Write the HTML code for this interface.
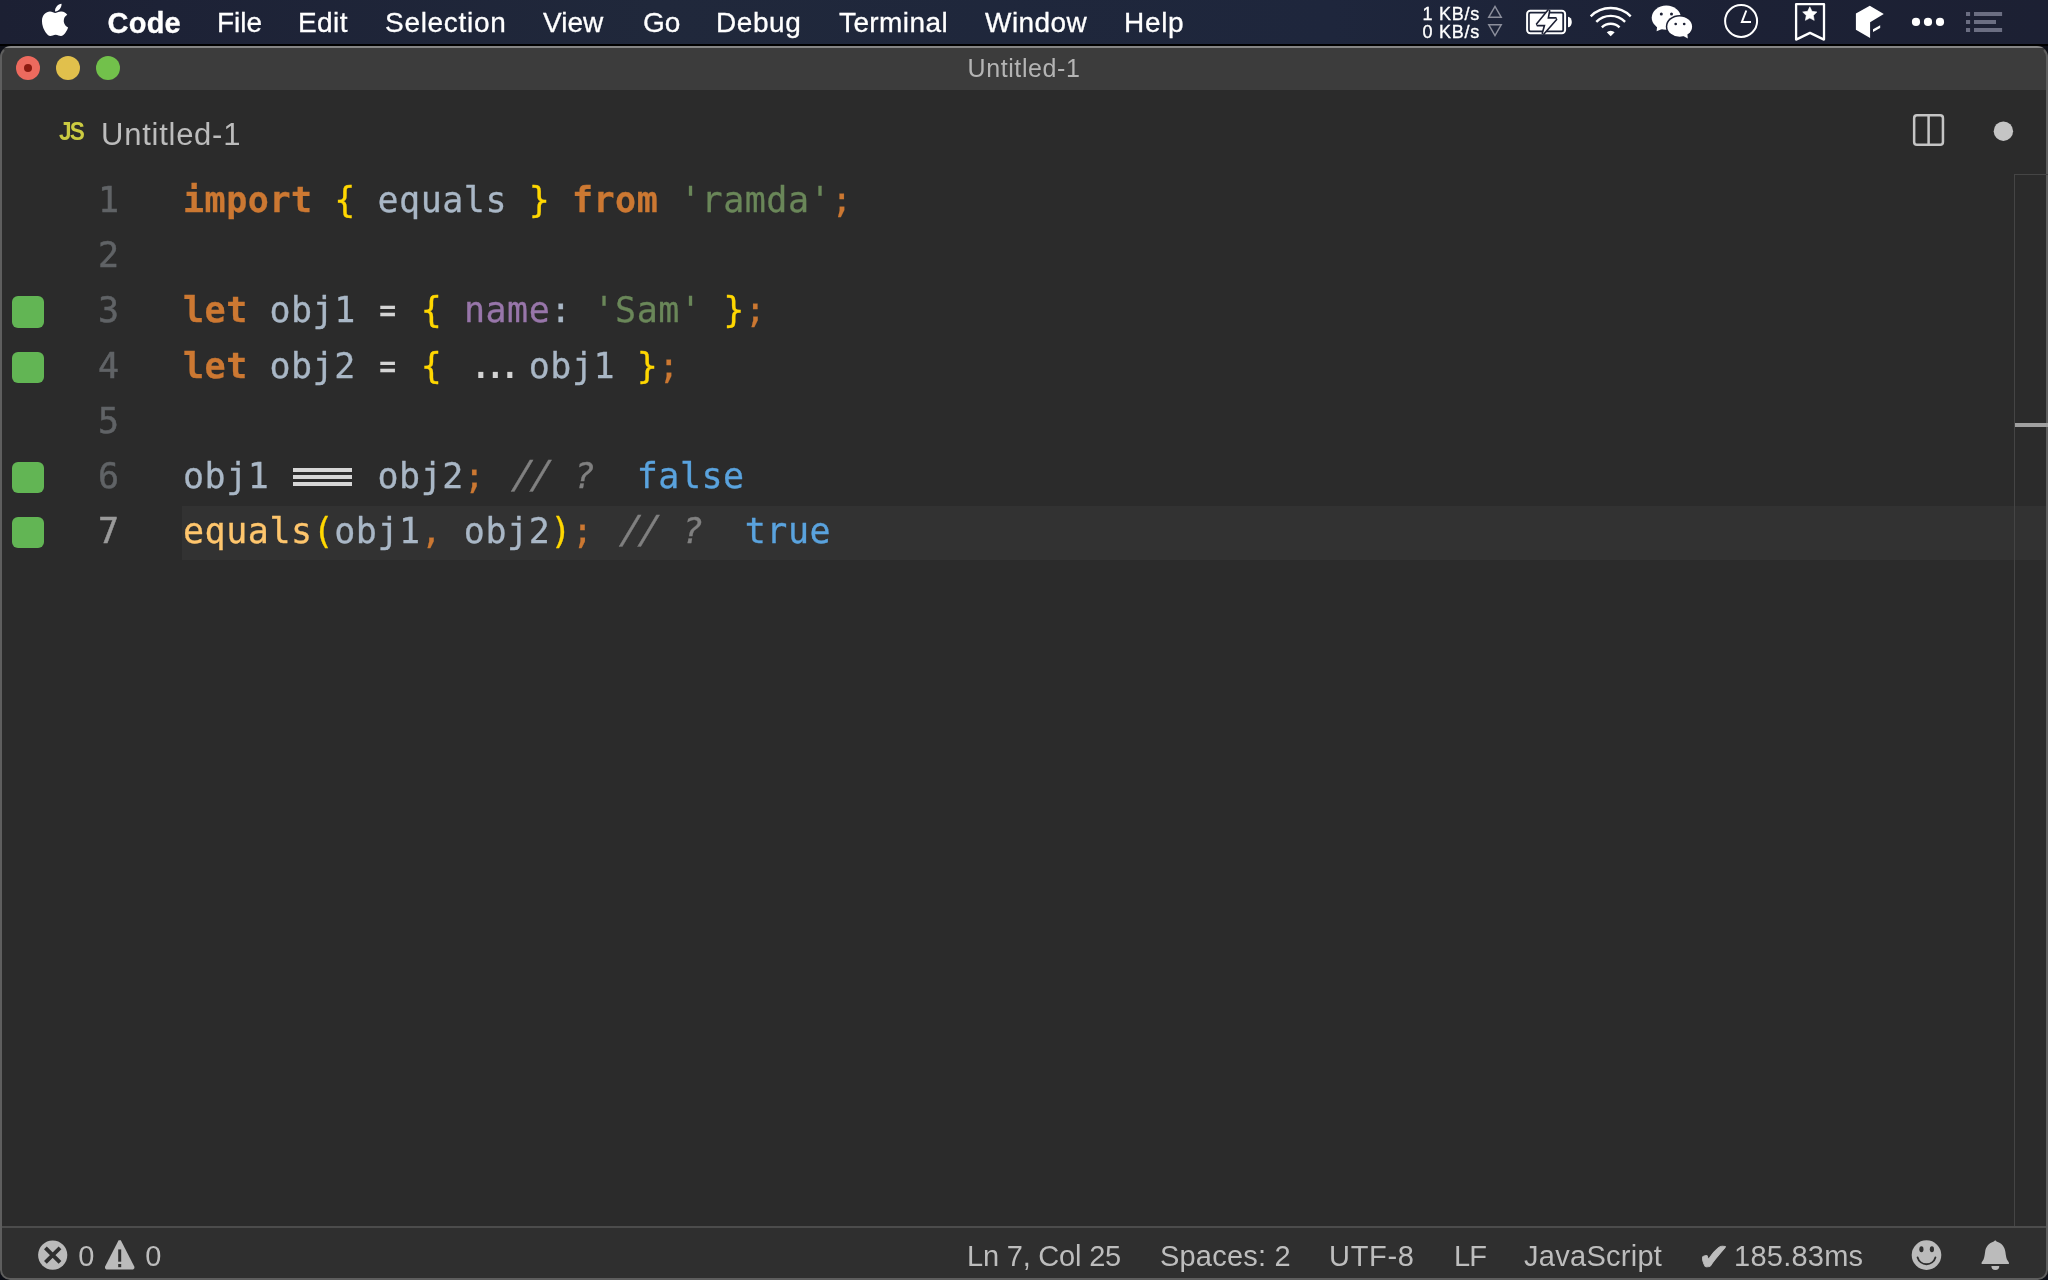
<!DOCTYPE html>
<html lang="en">
<head>
<meta charset="utf-8">
<title>Untitled-1</title>
<style>
*{margin:0;padding:0;box-sizing:border-box}
html,body{width:2048px;height:1280px;overflow:hidden;background:#0d0f17}
body{position:relative;font-family:"Liberation Sans",sans-serif;color:#fff}
.abs{position:absolute}
/* ---------- macOS menu bar ---------- */
#menubar{will-change:transform;position:absolute;left:0;top:0;width:2048px;height:45px;background:linear-gradient(90deg,#1c2033 0%,#1d2236 8%,#20283b 32%,#1e263c 65%,#1c2135 85%,#1c2033 100%)}
#menubar .mi{position:absolute;top:6px;font-size:28px;line-height:34px;color:#fff;white-space:nowrap;-webkit-text-stroke:.3px}
#menubar .mi.b{font-weight:bold}
#menubar .kb{position:absolute;left:1422px;width:58px;text-align:right;font-size:18px;line-height:20px;color:#fff;letter-spacing:.75px;white-space:nowrap;-webkit-text-stroke:.35px}
#mbline{position:absolute;left:0;top:44px;width:2048px;height:2px;background:#000}
/* ---------- window ---------- */
#win{position:absolute;left:0;top:46px;width:2048px;height:1234px;background:#2b2b2b;border-radius:11px 11px 10px 10px;overflow:hidden}
#titlebar{will-change:transform;position:absolute;left:0;top:0;width:2048px;height:44px;background:#3c3c3c;border-top:2px solid #858585}
#title{position:absolute;left:0;width:2048px;top:6px;text-align:center;font-size:25px;line-height:28px;color:#b4b4b4;letter-spacing:.6px}
.tl{position:absolute;top:8px;width:24px;height:24px;border-radius:50%}
#sbv{z-index:5;position:absolute;left:2014px;top:128px;width:1px;height:1052px;background:#454545}
#sbh{z-index:5;position:absolute;left:2014px;top:128px;width:34px;height:1px;background:#454545}
#sbmark{z-index:5;position:absolute;left:2015px;top:377px;width:33px;height:4px;background:#a0a0a0}
#win::after{content:"";position:absolute;left:0;top:0;right:0;bottom:0;border:2px solid #5e5e5e;border-top-color:transparent;border-radius:11px 11px 10px 10px;pointer-events:none}
/* ---------- tabs ---------- */
#tabs{will-change:transform;position:absolute;left:2px;top:44px;width:2044px;height:85px;background:#2b2b2b}
#jsic{position:absolute;left:57px;top:26px;font-weight:bold;font-size:26px;line-height:30px;color:#cbcb41;letter-spacing:-2px;transform:scaleX(.87);transform-origin:0 0}
#tabname{position:absolute;left:99px;top:27px;font-size:31px;line-height:36px;color:#bcbcbc;letter-spacing:.75px}
/* ---------- editor ---------- */
#editor{position:absolute;left:0;top:128px;width:2048px;height:1052px;will-change:transform;font-family:"DejaVu Sans Mono","Liberation Mono",monospace;font-size:35px}
.row{position:absolute;left:0;width:2048px;height:55.2px;line-height:55.2px;white-space:pre}
.ln{position:absolute;top:-1px;left:59px;width:60px;text-align:right;color:#606366;-webkit-text-stroke:.5px}
.code{position:absolute;top:-1px;left:183px;letter-spacing:.53px;color:#a9b7c6;-webkit-text-stroke:.3px}
.q{position:absolute;left:12.2px;top:12px;width:31.6px;height:31.2px;border-radius:6px;background:#62b554}
.k{color:#cc7832;font-weight:bold}
.p{color:#cc7832}
.y{color:#ffd700}
.s{color:#6a8759}
.pr{color:#9876aa}
.f{color:#ffc66d}
.c{color:#808080;font-style:italic}
.o{color:#5aa3de}
.w{color:#d4d4d4}
.eq3{display:inline-block;position:relative;color:transparent}
.eq3::before{content:"";position:absolute;left:2.4px;right:3.6px;top:18.7px;height:18px;background:linear-gradient(#d6d6d6 0,#d6d6d6 3.7px,transparent 3.7px,transparent 7.1px,#d6d6d6 7.1px,#d6d6d6 10.8px,transparent 10.8px,transparent 14.2px,#d6d6d6 14.2px,#d6d6d6 17.9px,transparent 17.9px)}
.dots{display:inline-block;width:64.8px;font-size:41px;line-height:1px;letter-spacing:-10.1px;padding-left:4.5px;color:#d4d4d4;-webkit-text-stroke:0}
.sl{display:inline-block;width:43.2px;letter-spacing:-2.5px;transform:translateX(5px) skewX(-7.7deg) scaleY(1.1);transform-origin:50% 62%}
.eq{display:inline-block;transform:scaleX(.8);color:#d4d4d4}
#curline{position:absolute;left:182px;top:332px;width:1866px;height:54px;background:#323232}
/* ---------- status bar ---------- */
#status{will-change:transform;position:absolute;left:0;top:1180px;width:2048px;height:54px;background:#2f2f2f;border-top:2px solid #4c4c4c;font-size:29px;color:#bdbdbd}
#status .si{position:absolute;top:11px;line-height:34px;white-space:nowrap}
</style>
</head>
<body>
<div id="menubar">
  <span class="mi b" style="left:107.500px;font-size:29px;letter-spacing:.25px">Code</span>
  <span class="mi" style="left:217px">File</span>
  <span class="mi" style="left:298px;letter-spacing:.4px">Edit</span>
  <span class="mi" style="left:385px;letter-spacing:.7px">Selection</span>
  <span class="mi" style="left:543px">View</span>
  <span class="mi" style="left:643px">Go</span>
  <span class="mi" style="left:716px;letter-spacing:.55px">Debug</span>
  <span class="mi" style="left:839px;letter-spacing:.4px">Terminal</span>
  <span class="mi" style="left:985px;letter-spacing:.45px">Window</span>
  <span class="mi" style="left:1124px;letter-spacing:.7px">Help</span>
<svg id="mbicons" width="2048" height="46" viewBox="0 0 2048 46" style="position:absolute;left:0;top:0">
  <g transform="translate(41.700,1.500) scale(0.0693,0.0719)" fill="#fff"><path d="M318.7 268.7c-.2-36.700 16.400-64.400 50-84.800-18.800-26.900-47.200-41.700-84.700-44.600-35.500-2.800-74.300 20.700-88.500 20.700-15 0-49.400-19.700-76.400-19.700C63.300 141.200 4 184.800 4 273.500q0 39.300 14.400 81.200c12.800 36.700 59 126.700 107.200 125.200 25.200-.6 43-17.900 75.800-17.900 31.800 0 48.300 17.900 76.400 17.900 48.600-.7 90.400-82.500 102.600-119.300-65.200-30.700-61.700-90-61.700-91.900zm-56.600-164.200c27.300-32.400 24.800-61.900 24-72.500-24.100 1.400-52 16.400-67.900 34.900-17.500 19.800-27.800 44.300-25.600 71.900 26.100 2 49.900-11.400 69.500-34.300z"/></g>
  <g fill="none" stroke="#8b8e9b" stroke-width="1.5" stroke-linejoin="miter">
    <path d="M1488.8 17.2L1495 6.4L1501.200 17.200Z"/>
    <path d="M1488.8 24.800L1501.200 24.800L1495 35.600Z"/>
  </g>
  <g>
    <rect x="1527.100" y="10.800" width="38" height="22.500" rx="3.200" fill="none" stroke="#fff" stroke-width="2"/>
    <rect x="1529.800" y="13.600" width="32.500" height="16.900" rx=".8" fill="#fff"/>
    <path d="M1568 16.800a3.800 5.250 0 0 1 0 10.500z" fill="#fff"/>
    <polygon points="1549,10.100 1536.900,24.800 1545.500,24.800 1542.900,34 1556.300,18.700 1547.400,18.700" fill="#fff" stroke="#1c2034" stroke-width="3.200" stroke-linejoin="miter" stroke-miterlimit="2.2" paint-order="stroke"/>
  </g>
  <g fill="none" stroke="#fff" stroke-width="2.400">
    <path d="M1590.690 16.290A28.300 28.300 0 0 1 1630.710 16.290"/>
    <path d="M1596.280 21.880A20.400 20.400 0 0 1 1625.120 21.880"/>
    <path d="M1601.860 27.460A12.500 12.500 0 0 1 1619.540 27.460"/>
    <path d="M1610.700 36.300L1606.740 32.340A5.600 5.600 0 0 1 1614.660 32.340Z" fill="#fff" stroke="none"/>
  </g>
  <g fill="#fff">
    <ellipse cx="1666.300" cy="17.700" rx="14.600" ry="12.100"/>
    <polygon points="1657.200,25.500 1656.600,31.300 1664,28.200"/>
    <ellipse cx="1679.700" cy="26.600" rx="13.900" ry="11.700" fill="#1c2034"/>
    <ellipse cx="1679.700" cy="26.600" rx="12.400" ry="10.200"/>
    <polygon points="1682.500,35.600 1687.800,38.400 1687.200,32.500"/>
    <g fill="#1c2034"><circle cx="1661.300" cy="14" r="1.500"/><circle cx="1671.500" cy="13.900" r="1.500"/><circle cx="1675.700" cy="24" r="1.350"/><circle cx="1684.200" cy="24" r="1.350"/></g>
  </g>
  <g fill="none" stroke="#fff" stroke-width="2">
    <circle cx="1741.100" cy="21" r="16"/>
    <polyline points="1746.300,10.500 1741.900,22 1751,22"/>
  </g>
  <path d="M1796.100 4.100H1824V39.600L1810 32.900L1796.100 39.600Z" fill="none" stroke="#fff" stroke-width="2.300" stroke-linejoin="round"/>
  <polygon points="1809.80,6.80 1811.97,11.31 1816.93,11.98 1813.32,15.44 1814.21,20.37 1809.80,18.00 1805.39,20.37 1806.28,15.44 1802.67,11.98 1807.63,11.31" fill="#fff" stroke="#fff" stroke-width=".6" stroke-linejoin="round"/>
  <polygon points="1869.800,5.800 1883.800,14.100 1870.100,22.200 1870.100,38.100 1855.900,29.800 1855.900,13.600" fill="#fff"/>
  <polygon points="1873,29.300 1880.200,25.300 1880.200,27.900 1873,32.100" fill="#fff"/>
  <g fill="#fff"><circle cx="1916" cy="21.900" r="4.100"/><circle cx="1928" cy="21.900" r="4.100"/><circle cx="1940" cy="21.900" r="4.100"/></g>
  <g fill="#6b6e82">
    <rect x="1966" y="12" width="4.100" height="4"/><rect x="1974" y="12" width="28.100" height="4"/>
    <rect x="1966" y="20" width="4.100" height="4"/><rect x="1974" y="20" width="22" height="4"/>
    <rect x="1966" y="28" width="4.100" height="4"/><rect x="1974" y="28" width="28.100" height="4"/>
  </g>
</svg>
  <span class="kb" style="top:4px">1 KB/s</span>
  <span class="kb" style="top:22px">0 KB/s</span>
</div>
<div id="mbline"></div>
<div id="win">
  <div id="titlebar">
    <div class="tl" style="left:16px;background:#ed6a5e"><i style="position:absolute;left:8px;top:8px;width:8px;height:8px;border-radius:50%;background:#8c1a10"></i></div>
    <div class="tl" style="left:56px;background:#e1c04c"></div>
    <div class="tl" style="left:96px;background:#72c14b"></div>
    <div id="title">Untitled-1</div>
  </div>
  <div id="tabs">
    <span id="jsic">JS</span>
    <span id="tabname">Untitled-1</span>
  </div>
  <svg id="tabicons" width="160" height="60" viewBox="1890 100 160 60" style="position:absolute;left:1890px;top:54px">
    <rect x="1914.150" y="115.350" width="28.800" height="29.500" rx="2.800" fill="none" stroke="#c5c5c5" stroke-width="2.500"/>
    <rect x="1927.350" y="115.350" width="2.500" height="29.500" fill="#c5c5c5"/>
    <circle cx="2003.400" cy="131.200" r="9.700" fill="#c5c5c5"/>
  </svg>
  <div id="sbv"></div><div id="sbh"></div><div id="sbmark"></div>
  <div id="editor">
    <div id="curline"></div>
    <div class="row" style="top:0"><span class="ln">1</span><span class="code"><span class="k">import</span> <span class="y">{</span> equals <span class="y">}</span> <span class="k">from</span> <span class="s">'ramda'</span><span class="p">;</span></span></div>
    <div class="row" style="top:55.2px"><span class="ln">2</span></div>
    <div class="row" style="top:110.4px"><i class="q"></i><span class="ln">3</span><span class="code"><span class="k">let</span> obj1 <span class="eq">=</span> <span class="y">{</span> <span class="pr">name</span>: <span class="s">'Sam'</span> <span class="y">}</span><span class="p">;</span></span></div>
    <div class="row" style="top:165.6px"><i class="q"></i><span class="ln">4</span><span class="code"><span class="k">let</span> obj2 <span class="eq">=</span> <span class="y">{</span> <span class="dots">...</span>obj1 <span class="y">}</span><span class="p">;</span></span></div>
    <div class="row" style="top:220.8px"><span class="ln">5</span></div>
    <div class="row" style="top:276.0px"><i class="q"></i><span class="ln">6</span><span class="code">obj1 <span class="eq3">===</span> obj2<span class="p">;</span> <span class="c"><span class="sl">//</span> <span style="position:relative;left:2px">?</span></span>  <span class="o">false</span></span></div>
    <div class="row" style="top:331.2px"><i class="q"></i><span class="ln" style="color:#9a9a9a">7</span><span class="code"><span class="f">equals</span><span class="y">(</span>obj1<span class="p">,</span> obj2<span class="y">)</span><span class="p">;</span> <span class="c"><span class="sl">//</span> <span style="position:relative;left:2px">?</span></span>  <span class="o">true</span></span></div>
  </div>
  <div id="status">
    <svg width="170" height="52" viewBox="0 1228 170 52" style="position:absolute;left:0;top:0">
      <circle cx="52.700" cy="1255.100" r="14.600" fill="#bbb"/>
      <path d="M45.400 1247.800L60 1262.400M60 1247.800L45.400 1262.400" stroke="#2f2f2f" stroke-width="3.900" fill="none"/>
      <path d="M118.600 1240.300h2.200l13.600 26.400v1.600l-1.300 1.300h-26.800l-1.300-1.300v-1.600z" fill="#bbb"/>
      <rect x="118.200" y="1249.400" width="3" height="12.300" fill="#2f2f2f"/>
      <rect x="118.200" y="1264" width="3" height="3.200" fill="#2f2f2f"/>
    </svg>
    <svg width="120" height="52" viewBox="1900 1228 120 52" style="position:absolute;left:1900px;top:0">
      <circle cx="1926.500" cy="1255.100" r="14.800" fill="#bbb"/>
      <ellipse cx="1921.400" cy="1249.300" rx="2.100" ry="3" fill="#2f2f2f"/><ellipse cx="1931.900" cy="1249.300" rx="2.100" ry="3" fill="#2f2f2f"/>
      <path d="M1917.600 1257.500A9.260 9.260 0 0 0 1935.400 1257.500" fill="none" stroke="#2f2f2f" stroke-width="1.900" stroke-linecap="round"/>
      <path d="M1995.200 1240.200L1996.600 1241.600C2001.500 1243 2004.800 1247 2005.400 1252C2005.900 1256 2006.500 1259 2007.600 1260.600L2008.900 1262.600V1264.100H1981.600V1262.600L1982.900 1260.600C1984 1259 1984.600 1256 1985.100 1252C1985.700 1247 1989 1243 1993.800 1241.600Z" fill="#bbb"/>
      <path d="M1991.400 1266h7.900a3.950 4.100 0 0 1-7.900 0z" fill="#bbb"/>
    </svg>
    <span class="si" id="chk" style="left:1698px;top:12px;-webkit-text-stroke:.8px;font-family:'DejaVu Sans',sans-serif;font-size:38px">&#10004;</span>
    <span class="si" style="left:78.3px">0</span>
    <span class="si" style="left:145.300px">0</span>
    <span class="si" style="left:967px;letter-spacing:-.2px">Ln 7, Col 25</span>
    <span class="si" style="left:1160px;letter-spacing:.2px">Spaces: 2</span>
    <span class="si" style="left:1329px;letter-spacing:.7px">UTF-8</span>
    <span class="si" style="left:1454px;letter-spacing:-1px">LF</span>
    <span class="si" style="left:1524px;letter-spacing:.28px">JavaScript</span>
    <span class="si" style="left:1734px;letter-spacing:.25px">185.83ms</span>
  </div>
</div>
</body>
</html>
